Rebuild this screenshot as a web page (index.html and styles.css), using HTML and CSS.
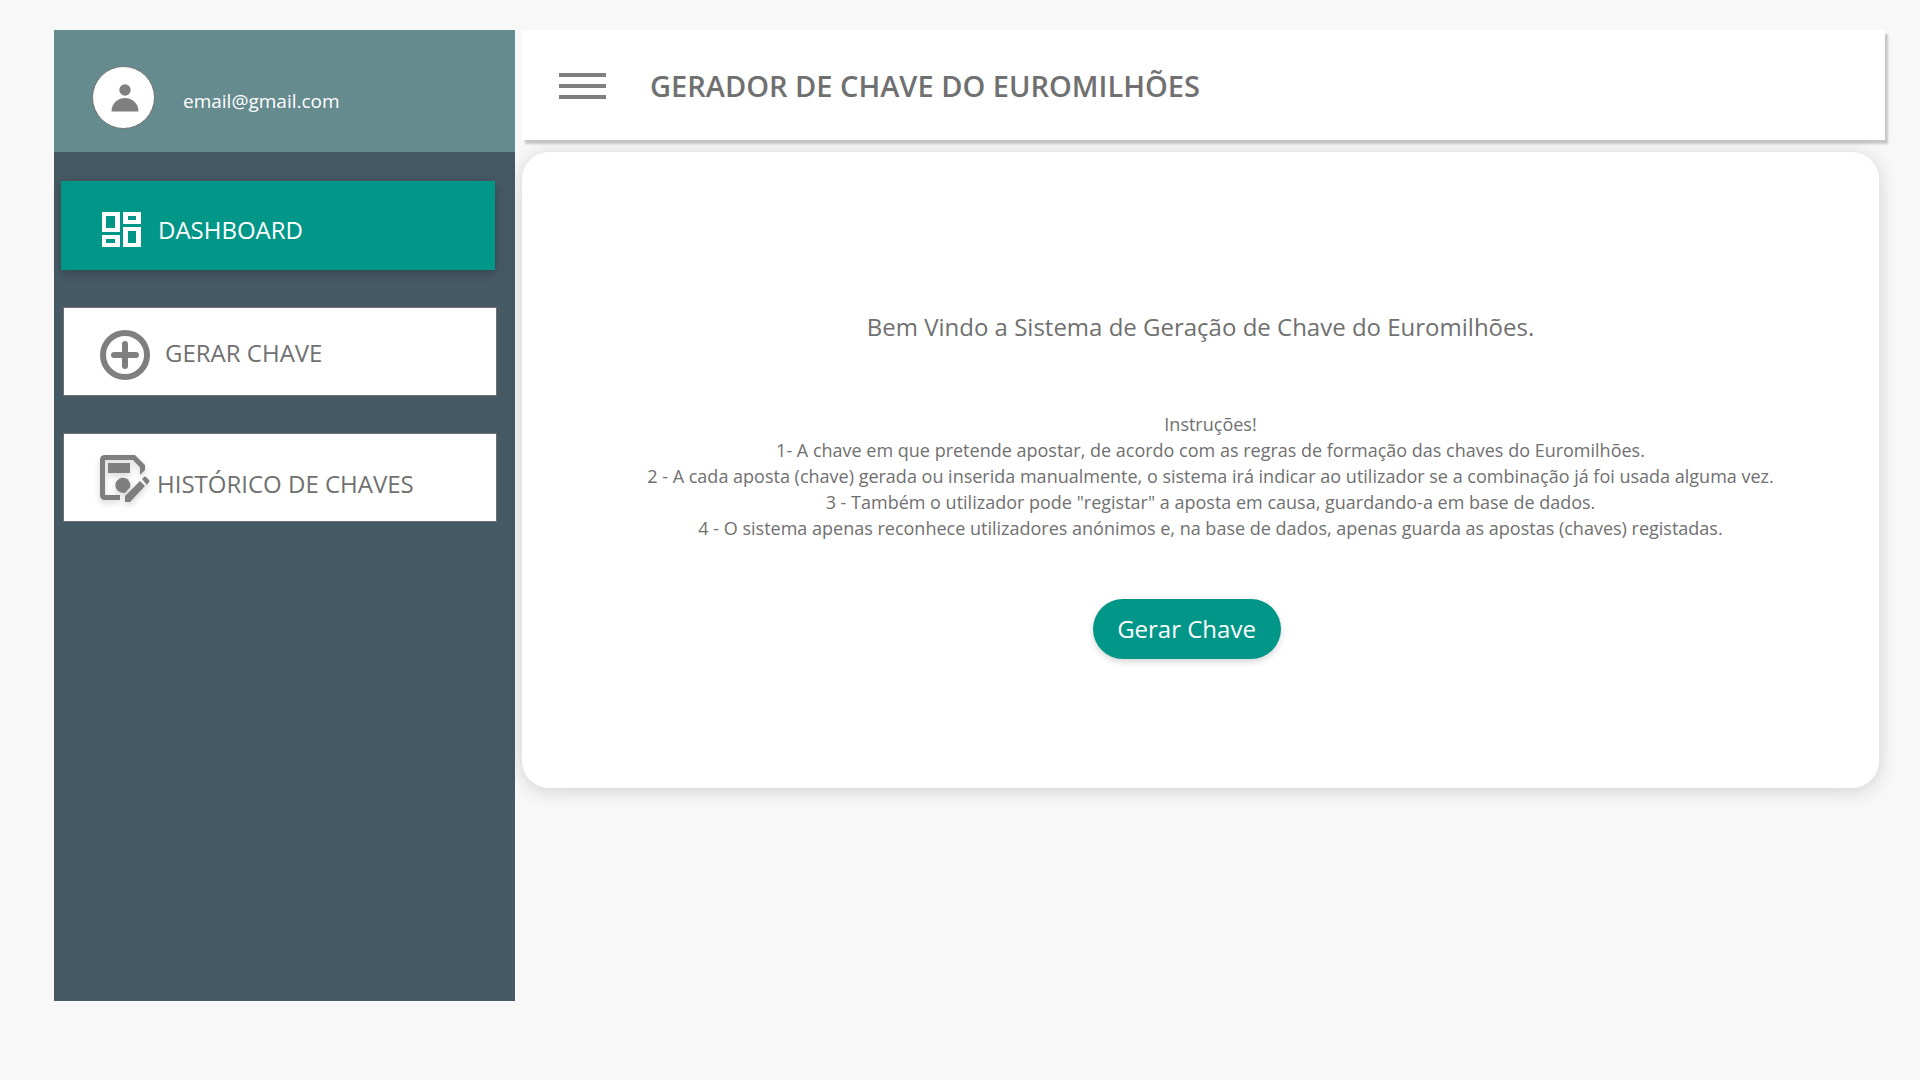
FILE: index.html
```html
<!DOCTYPE html>
<html lang="pt">
<head>
<meta charset="utf-8">
<meta name="viewport" content="width=device-width, initial-scale=1">
<title>Gerador de Chave do Euromilhões</title>
<link rel="stylesheet" href="styles.css">
</head>
<body>
<div class="layout">
  <aside class="sidebar">
    <div class="profile">
      <span class="avatar">
        <svg width="28" height="28" viewBox="0 0 28 28" aria-hidden="true"><circle cx="14" cy="6" r="5.7"/><path d="M.5 27.5C.5 19.500 6.500 14 14 14s13.500 5.500 13.500 13.500z"/></svg>
      </span>
      <span class="email">email@gmail.com</span>
    </div>
    <nav class="menu">
      <a class="item item-active" href="#dashboard">
        <svg class="icon-dashboard" width="39" height="36" viewBox="0 0 39 36" aria-hidden="true"><path fill-rule="evenodd" d="M0 0h18v20H0zM4 4v12h9V4zM21 0h18v12H21zM26 4v4h8V4zM21 15h18v20H21zM26 19v12h8V19zM0 23h18v12H0zM4 27v4h9v-4z"/></svg>
        <span>DASHBOARD</span>
      </a>
      <a class="item item-generate" href="#gerar">
        <svg class="icon-plus" width="50" height="50" viewBox="0 0 50 50" aria-hidden="true"><circle cx="25" cy="25" r="22"/><path d="M25 14v22M14 25h22"/></svg>
        <span>GERAR CHAVE</span>
      </a>
      <a class="item item-history" href="#historico">
        <svg class="icon-history" width="49" height="48" viewBox="0 0 49 48" aria-hidden="true"><path d="M20 45H5Q0 45 0 40V5Q0 0 5 0H35L45 10V15L40 20V12.500L33 5H5V40H20Z"/><path d="M8 8h22v10H8z"/><path d="M25 38L30 32.500A7.500 7.500 0 1 0 21 37.500z"/><path d="M25 47v-6l15-15 5 5-15 16zM42 24l2-2q1-1 2 0l3 3q1 1 0 2l-2 3z"/></svg>
        <span>HISTÓRICO DE CHAVES</span>
      </a>
    </nav>
  </aside>
  <main class="content">
    <header class="topbar">
      <button class="burger" type="button" aria-label="Menu"><span></span><span></span><span></span></button>
      <h1>GERADOR DE CHAVE DO EUROMILHÕES</h1>
    </header>
    <section class="card">
      <h2>Bem Vindo a Sistema de Geração de Chave do Euromilhões.</h2>
      <div class="instructions">
        <p>Instruções!</p>
        <p>1- A chave em que pretende apostar, de acordo com as regras de formação das chaves do Euromilhões.</p>
        <p>2 - A cada aposta (chave) gerada ou inserida manualmente, o sistema irá indicar ao utilizador se a combinação já foi usada alguma vez.</p>
        <p>3 - Também o utilizador pode "registar" a aposta em causa, guardando-a em base de dados.</p>
        <p>4 - O sistema apenas reconhece utilizadores anónimos e, na base de dados, apenas guarda as apostas (chaves) registadas.</p>
      </div>
      <button class="primary" type="button">Gerar Chave</button>
    </section>
  </main>
</div>
</body>
</html>
```
FILE: styles.css
```css
* { box-sizing: border-box; }
body {
  margin: 0;
  background: #f8f8f8;
  color: #707070;
  font-family: "Open Sans", "Noto Sans", sans-serif;
}
h1, h2, p { margin: 0; }
.layout {
  display: flex;
  gap: 7px;
  padding: 30px 35px 79px 54px;
}
.sidebar {
  flex: 0 0 461px;
  min-height: calc(100vh - 109px);
  background: #465a65;
}
.profile {
  display: flex;
  align-items: center;
  gap: 28px;
  height: 122px;
  padding: 13px 38px 0;
  background: #658b8f;
  color: #fff;
}
.avatar {
  display: grid;
  place-items: center;
  width: 63px;
  height: 63px;
  border: 1px solid #707070;
  border-radius: 50%;
  background: #fff;
}
.avatar svg { margin-left: 2px; fill: #7f7f7f; }
.email {
  padding-top: 7px;
  font-size: 19px;
  line-height: 26px;
}
.menu {
  display: flex;
  flex-direction: column;
  gap: 37px;
  padding: 29px 18px 29px 9px;
}
.item {
  display: flex;
  align-items: center;
  gap: 15px;
  height: 89px;
  padding: 0 36px;
  border: 1px solid #707070;
  background: #fff;
  color: #707070;
  font-size: 24px;
  line-height: 32px;
  text-decoration: none;
  white-space: nowrap;
}
.item-active {
  margin: 0 2px 0 -2px;
  padding: 9px 41px 0;
  border: 0;
  gap: 17px;
  background: #009688;
  box-shadow: 0 3px 10px rgba(0, 0, 0, .25);
  color: #fff;
}
.item-generate { padding-top: 6px; }
.item-generate span { padding-bottom: 4px; }
.item-history { gap: 8px; padding-top: 12px; }
.icon-dashboard { fill: #fff; }
.icon-plus {
  fill: none;
  stroke: #7f7f7f;
  stroke-width: 6;
  stroke-linecap: round;
}
.icon-history {
  align-self: flex-start;
  margin-top: 9px;
  overflow: visible;
  fill: #7f7f7f;
  filter: drop-shadow(0 3px 3px rgba(0, 0, 0, .16));
}
.content { flex: 1; min-width: 0; }
.topbar {
  display: flex;
  align-items: center;
  gap: 44px;
  height: 110px;
  padding: 2px 37px 0;
  background: #fff;
  box-shadow: 3px 4px 2px rgba(0, 0, 0, .2);
}
.topbar h1 {
  font-size: 29px;
  line-height: 38px;
  font-weight: 600;
}
.burger {
  display: flex;
  flex-direction: column;
  gap: 7px;
  width: 47px;
  padding: 0;
  border: 0;
  background: none;
}
.burger span { width: 100%; height: 4px; background: #7f7f7f; }
.card {
  display: flex;
  flex-direction: column;
  align-items: center;
  margin: 12px 6px 0 0;
  padding: 157px 20px 129px;
  border-radius: 27px;
  background: #fff;
  box-shadow: 0 3px 20px rgba(0, 0, 0, .16);
  text-align: center;
}
.card h2 {
  font-size: 24px;
  line-height: 36px;
  font-weight: 400;
}
.instructions {
  margin: 66px 0 58px 20px;
  font-size: 18px;
  line-height: 26px;
}
.primary {
  margin-right: 28px;
  height: 60px;
  width: 188px;
  padding: 0;
  border: 0;
  border-radius: 30px;
  background: #009688;
  box-shadow: 0 3px 6px rgba(0, 0, 0, .16);
  color: #fff;
  font: 24px/32px "Open Sans", "Noto Sans", sans-serif;
}
```
